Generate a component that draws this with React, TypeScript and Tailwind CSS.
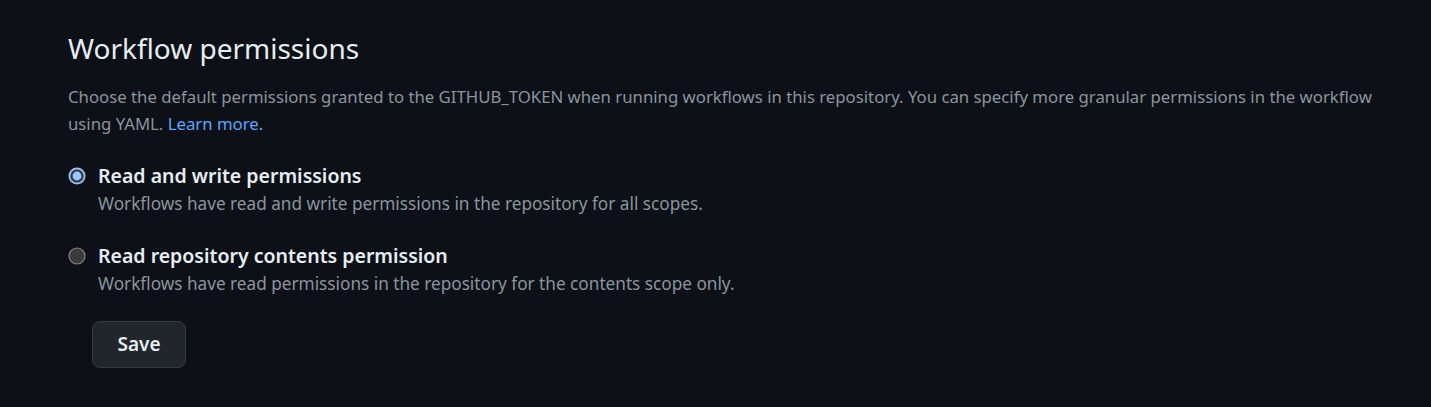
import React, { useState } from "react";

const font = { fontFamily: '"Noto Sans", "Open Sans", sans-serif' };

interface IRadio {
  checked: boolean;
}

const RadioDot: React.FC<IRadio> = ({ checked }) => {
  if (checked) {
    return (
      <svg width="18" height="18" viewBox="0 0 18 18" className="shrink-0">
        <circle cx="9" cy="9" r="8.5" fill="#99c8ff" />
        <circle cx="9" cy="9" r="5.6" fill="#99c8ff" stroke="#3b3f46" strokeWidth="2.4" />
      </svg>
    );
  }
  return (
    <svg width="18" height="18" viewBox="0 0 18 18" className="shrink-0">
      <circle cx="9" cy="9" r="8" fill="#3b3b3b" stroke="#858585" strokeWidth="1.2" />
    </svg>
  );
};

const options = [
  {
    id: "write",
    title: "Read and write permissions",
    note: "Workflows have read and write permissions in the repository for all scopes.",
  },
  {
    id: "read",
    title: "Read repository contents permission",
    note: "Workflows have read permissions in the repository for the contents scope only.",
  },
];

export default function App() {
  const [selected, setSelected] = useState("write");

  return (
    <div className="min-h-screen bg-[#0d1117] pl-[68px] pt-[30px] pb-[39px]" style={font}>
      <h2 className="text-[28px] leading-[36px] text-[#e6edf3] font-normal">Workflow permissions</h2>
      <p className="mt-[17px] max-w-[1325px] text-[16.75px] leading-[27px] text-[#8b949e]">
        Choose the default permissions granted to the GITHUB_TOKEN when running workflows in this repository. You can
        specify more granular permissions in the workflow using YAML.{" "}
        <a className="text-[#58a6ff]" href="#">
          Learn more.
        </a>
      </p>

      <div className="mt-[25px] flex flex-col gap-[24px]">
        {options.map((o) => (
          <label key={o.id} className="flex flex-col cursor-pointer" onClick={() => setSelected(o.id)}>
            <div className="flex items-center gap-[12px]">
              <RadioDot checked={selected === o.id} />
              <span className="text-[19.5px] leading-[28px] font-semibold text-[#e6edf3]">{o.title}</span>
            </div>
            <span className="pl-[30px] text-[17.2px] leading-[28px] text-[#8b949e]">{o.note}</span>
          </label>
        ))}
      </div>

      <button className="mt-[23px] ml-[24px] w-[94px] h-[47px] rounded-[8px] bg-[#21262d] border border-[#363b42] text-[19px] font-semibold text-[#e6edf3]">
        Save
      </button>
    </div>
  );
}
